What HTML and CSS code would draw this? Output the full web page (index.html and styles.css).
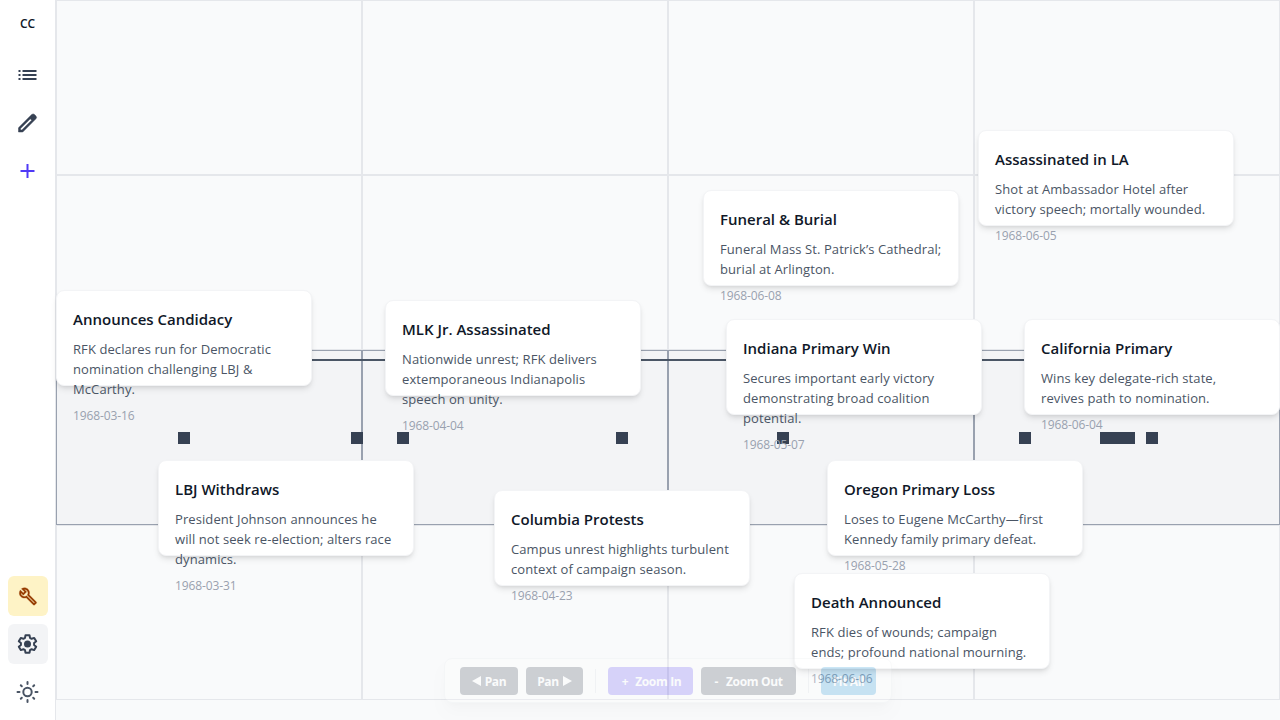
FILE: index.html
```html
<!DOCTYPE html>
<html lang="en">
<head>
<meta charset="utf-8">
<title>Timeline</title>
<link rel="stylesheet" href="styles.css">
</head>
<body>
<div class="app">
  <aside class="sidebar">
    <div class="brand">CC</div>
    <nav class="nav">
      <button class="icon-btn"><svg viewBox="0 0 24 24"><path d="M3 7h2v2H3zm0 4h2v2H3zm0 4h2v2H3zM7 7h14v2H7zm0 4h14v2H7zm0 4h14v2H7z"/></svg></button>
      <button class="icon-btn pencil"><svg viewBox="0 0 24 24"><path fill-rule="evenodd" d="M5 19h1.4l9.800-9.800-1.400-1.400L5 17.600V19zm-2 2v-4.250L16.200 3.580a2 2 0 0 1 2.820 0l1.400 1.420a2 2 0 0 1 0 2.800L7.250 21H3z"/></svg></button>
      <button class="icon-btn add"><svg viewBox="0 0 24 24"><path d="M11 5h2v6h6v2h-6v6h-2v-6H5v-2h6z"/></svg></button>
    </nav>
    <div class="tools">
      <button class="icon-btn build"><svg viewBox="0 0 24 24"><path fill-rule="evenodd" d="M22.61 18.99l-9.08-9.08c.93-2.34.45-5.1-1.44-7C9.79.61 6.21.4 3.66 2.26L7.5 6.11 6.08 7.52 2.25 3.69C.39 6.23.6 9.82 2.9 12.11c1.86 1.86 4.57 2.35 6.89 1.48l9.11 9.11c.39.39 1.02.39 1.41 0l2.3-2.3c.4-.38.4-1.01 0-1.41zm-3 1.6l-9.46-9.46c-.61.45-1.29.72-2 .82-1.36.2-2.79-.21-3.83-1.25C3.37 9.76 2.93 8.5 3 7.26l3.09 3.09 4.24-4.24-3.09-3.09c1.24-.07 2.49.37 3.44 1.31 1.08 1.08 1.49 2.57 1.24 3.96-.12.71-.42 1.37-.88 1.96l9.45 9.45-.88.89z"/></svg></button>
      <button class="icon-btn settings"><svg viewBox="0 0 24 24"><path class="gear" d="M10 3.200h4l.5 2.700 1.600.9 2.600-.9 2 3.400-2.100 1.800v1.800l2.100 1.800-2 3.400-2.600-.9-1.600.9-.5 2.700h-4l-.5-2.700-1.600-.9-2.600.9-2-3.400 2.100-1.800v-1.800L3.300 9.300l2-3.400 2.600.9 1.600-.9z"/><circle cx="12" cy="12" r="3.500"/></svg></button>
      <button class="icon-btn sun"><svg viewBox="0 0 24 24"><circle class="ring" cx="12" cy="12" r="4.200"/><path class="rays" d="M12 2v2M12 20v2M2 12h2M20 12h2M5.300 5.300l1 1M17.700 17.700l1 1M5.300 18.700l1-1M17.700 6.300l1-1"/></svg></button>
    </div>
  </aside>
  <main class="board">
    <div class="grid">
      <i></i><i></i><i></i><i></i>
      <i></i><i></i><i></i><i></i>
      <i class="hot"></i><i class="hot"></i><i class="hot"></i><i class="hot"></i>
      <i></i><i></i><i></i><i></i>
    </div>
    <div class="axis"></div>
    <b class="mark m1"></b><b class="mark m2"></b><b class="mark m3"></b><b class="mark m4"></b><b class="mark m5"></b><b class="mark m6"></b><b class="mark m7"></b><b class="mark m8"></b><b class="mark m9"></b><b class="mark m10"></b>

    <article class="card c1"><h3>Announces Candidacy</h3><p>RFK declares run for Democratic<br>nomination challenging LBJ &amp;<br>McCarthy.</p><time>1968-03-16</time></article>
    <article class="card c2"><h3>LBJ Withdraws</h3><p>President Johnson announces he<br>will not seek re-election; alters race<br>dynamics.</p><time>1968-03-31</time></article>
    <article class="card c3"><h3>MLK Jr. Assassinated</h3><p>Nationwide unrest; RFK delivers<br>extemporaneous Indianapolis<br>speech on unity.</p><time>1968-04-04</time></article>
    <article class="card c4"><h3>Columbia Protests</h3><p>Campus unrest highlights turbulent<br>context of campaign season.</p><time>1968-04-23</time></article>
    <article class="card c5"><h3>Indiana Primary Win</h3><p>Secures important early victory<br>demonstrating broad coalition<br>potential.</p><time>1968-05-07</time></article>
    <article class="card c6"><h3>Oregon Primary Loss</h3><p>Loses to Eugene McCarthy—first<br>Kennedy family primary defeat.</p><time>1968-05-28</time></article>
    <article class="card c7"><h3>California Primary</h3><p>Wins key delegate-rich state,<br>revives path to nomination.</p><time>1968-06-04</time></article>
    <article class="card c8"><h3>Assassinated in LA</h3><p>Shot at Ambassador Hotel after<br>victory speech; mortally wounded.</p><time>1968-06-05</time></article>
    <article class="card c9"><h3>Death Announced</h3><p>RFK dies of wounds; campaign<br>ends; profound national mourning.</p><time>1968-06-06</time></article>
    <article class="card c10"><h3>Funeral &amp; Burial</h3><p>Funeral Mass St. Patrick’s Cathedral;<br>burial at Arlington.</p><time>1968-06-08</time></article>

    <div class="controls">
      <button class="btn pan-l"><svg viewBox="0 0 9 10"><path d="M9 0v10L0 5z"/></svg>Pan</button>
      <button class="btn pan-r">Pan<svg viewBox="0 0 9 10"><path d="M0 0v10l9-5z"/></svg></button>
      <span class="sep"></span>
      <button class="btn zoom-in"><span>+</span>Zoom In</button>
      <button class="btn zoom-out"><span>-</span>Zoom Out</button>
      <span class="sep"></span>
      <button class="btn fit">Fit All</button>
    </div>
  </main>
</div>
</body>
</html>
```
FILE: styles.css
```css
* { box-sizing: border-box; }
body { margin: 0; font-family: "Open Sans", "Noto Sans", sans-serif; background: #f9fafb; color: #101828; }
button { border: 0; padding: 0; margin: 0; background: none; font: inherit; }
.app { display: flex; width: 1280px; height: 720px; overflow: hidden; }
.sidebar { width: 56px; flex: none; background: #fff; border-right: 1px solid #e5e7eb; display: flex; flex-direction: column; align-items: center; padding: 8px 0; }
.brand { height: 31px; line-height: 31px; font-size: 12px; font-weight: 600; letter-spacing: -0.2px; }
.nav { display: flex; flex-direction: column; gap: 8px; margin-top: 16px; }
.tools { display: flex; flex-direction: column; gap: 8px; margin-top: auto; }
.icon-btn { width: 40px; height: 40px; border-radius: 6px; display: flex; align-items: center; justify-content: center; padding-right: 1px; color: #364153; }
.icon-btn svg { width: 24px; height: 24px; fill: currentColor; transform: translateX(.5px); }
.pencil path { stroke: currentColor; stroke-width: .5; }
.add { color: #4f39f6; }
.build { background: #fef3c6; color: #973c00; }
.icon-btn.build svg { width: 19px; height: 19px; }
.build path { stroke: currentColor; stroke-width: .4; }
.settings { background: #f3f4f6; }
.gear { fill: none; stroke: currentColor; stroke-width: 2; stroke-linejoin: round; }
.sun { color: #4a5565; }
.ring { fill: none; stroke: currentColor; stroke-width: 2; }
.rays { stroke: currentColor; stroke-width: 2; stroke-linecap: round; }

.board { position: relative; flex: 1; background: #f9fafb; }
.grid { display: grid; grid-template-columns: repeat(4, 306px); grid-template-rows: repeat(4, 175px); }
.grid i { border: 1px solid #e5e7eb; }
.grid .hot { border-color: #99a1af; background: #f3f4f6; }
.axis { position: absolute; left: 0; right: 0; top: 359px; height: 2px; background: #4a5565; }
.mark { position: absolute; top: 432px; width: 12px; height: 12px; background: #364153; }
.m1 { left: 122px; } .m2 { left: 295px; } .m3 { left: 341px; } .m4 { left: 560px; } .m5 { left: 721px; }
.m6 { left: 963px; } .m7 { left: 1044px; } .m8 { left: 1056px; } .m9 { left: 1067px; } .m10 { left: 1090px; }

.card { position: absolute; width: 256px; height: 96px; padding: 16px; background: #fff; border: 1px solid #f3f4f6; border-radius: 8px; box-shadow: 0 4px 6px -1px rgba(0,0,0,.1), 0 2px 4px -2px rgba(0,0,0,.1); white-space: nowrap; }
.card h3 { margin: 0 0 8px; font-size: 15px; line-height: 24px; font-weight: 600; }
.card p { margin: 0 0 9px; font-size: 13px; line-height: 20px; letter-spacing: .09px; color: #4a5565; }
.card time { display: block; font-size: 12px; line-height: 16px; letter-spacing: -.1px; color: #99a1af; }
.c1 { left: 0; top: 290px; }
.c2 { left: 102px; top: 460px; }
.c3 { left: 329px; top: 300px; }
.c4 { left: 438px; top: 490px; }
.c5 { left: 670px; top: 319px; }
.c6 { left: 771px; top: 460px; }
.c7 { left: 968px; top: 319px; }
.c8 { left: 922px; top: 130px; }
.c9 { left: 738px; top: 573px; }
.c10 { left: 647px; top: 190px; }

.controls { position: absolute; left: 388px; top: 658px; width: 448px; height: 45px; padding: 0 15px; display: flex; align-items: center; gap: 8px; background: #fff; border: 1px solid #e5e7eb; border-radius: 8px; box-shadow: 0 10px 15px -3px rgba(0,0,0,.1), 0 4px 6px -4px rgba(0,0,0,.1); opacity: .2; }
.btn { height: 28px; padding-top: 1px; border-radius: 4px; background: #1e2939; color: #fff; font-size: 12px; font-weight: 700; letter-spacing: -.35px; display: flex; align-items: center; justify-content: center; gap: 4px; white-space: nowrap; }
.btn svg { width: 9px; height: 10px; fill: currentColor; }
.pan-l { width: 58px; }
.pan-r { width: 57px; }
.zoom-in { width: 85px; gap: 7px; padding-left: 2px; background: #4f39f6; }
.zoom-out { width: 95px; gap: 8px; }
.fit { width: 55px; background: #0084d1; }
.sep { width: 1px; height: 24px; margin: 0 4px; background: #d1d5dc; }
```
